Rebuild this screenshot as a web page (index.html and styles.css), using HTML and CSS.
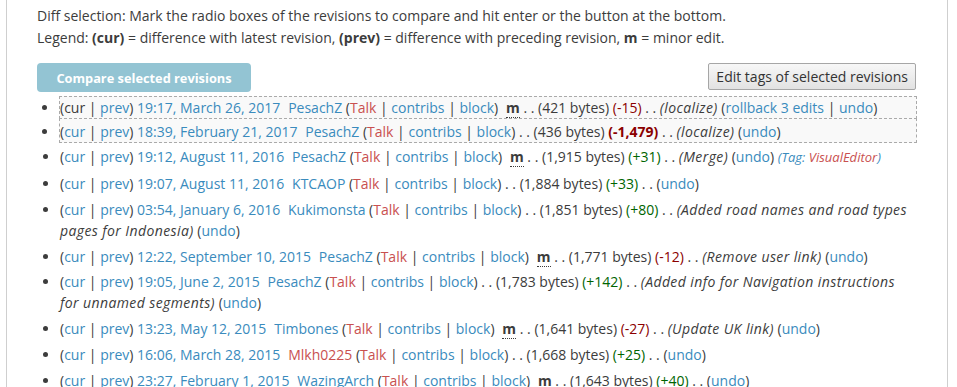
FILE: index.html
```html
<!DOCTYPE html>
<html>
<head lang="en">
    <meta charset="UTF-8">
    <title>Revision history</title>
    <link rel="stylesheet" href="styles.css">
</head>
<body>
<div class="content">
    <p class="history-legend">
        Diff selection: Mark the radio boxes of the revisions to compare and hit enter or the button at the bottom.<br>
        Legend: <b>(cur)</b> = difference with latest revision, <b>(prev)</b> = difference with preceding revision, <b>m</b> = minor edit.
    </p>
    <form id="history-form">
        <div class="history-buttons">
            <button type="button" class="compare-button">Compare selected revisions</button>
            <button type="button" class="tags-button">Edit tags of selected revisions</button>
        </div>
        <ul id="pagehistory" class="pagehistory">
            <li class="selected">
                <span class="histlinks">(cur | <a href="#">prev</a>)</span>
                <a href="#" class="history-date">19:17, March 26, 2017</a>
                <span class="history-user"><a href="#">PesachZ</a> (<a href="#" class="new">Talk</a> | <a href="#">contribs</a> | <a href="#">block</a>)</span>
                <abbr class="minoredit" title="This is a minor edit">m</abbr>
                <span class="separator">. .</span>
                <span class="history-size">(421 bytes)</span>
                <span class="diff-minus">(-15)</span>
                <span class="separator">. .</span>
                <span class="comment">(localize)</span>
                <span class="tools">(<a href="#">rollback 3 edits</a> | <a href="#">undo</a>)</span>
            </li>
            <li class="selected">
                <span class="histlinks">(<a href="#">cur</a> | <a href="#">prev</a>)</span>
                <a href="#" class="history-date">18:39, February 21, 2017</a>
                <span class="history-user"><a href="#">PesachZ</a> (<a href="#" class="new">Talk</a> | <a href="#">contribs</a> | <a href="#">block</a>)</span>
                <span class="separator">. .</span>
                <span class="history-size">(436 bytes)</span>
                <strong class="diff-minus">(-1,479)</strong>
                <span class="separator">. .</span>
                <span class="comment">(localize)</span>
                <span class="tools">(<a href="#">undo</a>)</span>
            </li>
            <li>
                <span class="histlinks">(<a href="#">cur</a> | <a href="#">prev</a>)</span>
                <a href="#" class="history-date">19:12, August 11, 2016</a>
                <span class="history-user"><a href="#">PesachZ</a> (<a href="#" class="new">Talk</a> | <a href="#">contribs</a> | <a href="#">block</a>)</span>
                <abbr class="minoredit" title="This is a minor edit">m</abbr>
                <span class="separator">. .</span>
                <span class="history-size">(1,915 bytes)</span>
                <span class="diff-plus">(+31)</span>
                <span class="separator">. .</span>
                <span class="comment">(Merge)</span>
                <span class="tools">(<a href="#">undo</a>)</span>
                <span class="tag-markers">(Tag: <span class="tag-name">VisualEditor</span>)</span>
            </li>
            <li>
                <span class="histlinks">(<a href="#">cur</a> | <a href="#">prev</a>)</span>
                <a href="#" class="history-date">19:07, August 11, 2016</a>
                <span class="history-user"><a href="#">KTCAOP</a> (<a href="#" class="new">Talk</a> | <a href="#">contribs</a> | <a href="#">block</a>)</span>
                <span class="separator">. .</span>
                <span class="history-size">(1,884 bytes)</span>
                <span class="diff-plus">(+33)</span>
                <span class="separator">. .</span>
                <span class="tools">(<a href="#">undo</a>)</span>
            </li>
            <li>
                <span class="histlinks">(<a href="#">cur</a> | <a href="#">prev</a>)</span>
                <a href="#" class="history-date">03:54, January 6, 2016</a>
                <span class="history-user"><a href="#">Kukimonsta</a> (<a href="#" class="new">Talk</a> | <a href="#">contribs</a> | <a href="#">block</a>)</span>
                <span class="separator">. .</span>
                <span class="history-size">(1,851 bytes)</span>
                <span class="diff-plus">(+80)</span>
                <span class="separator">. .</span>
                <span class="comment">(Added road names and road types pages for Indonesia)</span>
                <span class="tools">(<a href="#">undo</a>)</span>
            </li>
            <li>
                <span class="histlinks">(<a href="#">cur</a> | <a href="#">prev</a>)</span>
                <a href="#" class="history-date">12:22, September 10, 2015</a>
                <span class="history-user"><a href="#">PesachZ</a> (<a href="#" class="new">Talk</a> | <a href="#">contribs</a> | <a href="#">block</a>)</span>
                <abbr class="minoredit" title="This is a minor edit">m</abbr>
                <span class="separator">. .</span>
                <span class="history-size">(1,771 bytes)</span>
                <span class="diff-minus">(-12)</span>
                <span class="separator">. .</span>
                <span class="comment">(Remove user link)</span>
                <span class="tools">(<a href="#">undo</a>)</span>
            </li>
            <li>
                <span class="histlinks">(<a href="#">cur</a> | <a href="#">prev</a>)</span>
                <a href="#" class="history-date">19:05, June 2, 2015</a>
                <span class="history-user"><a href="#">PesachZ</a> (<a href="#" class="new">Talk</a> | <a href="#">contribs</a> | <a href="#">block</a>)</span>
                <span class="separator">. .</span>
                <span class="history-size">(1,783 bytes)</span>
                <span class="diff-plus">(+142)</span>
                <span class="separator">. .</span>
                <span class="comment">(Added info for Navigation instructions for unnamed segments)</span>
                <span class="tools">(<a href="#">undo</a>)</span>
            </li>
            <li>
                <span class="histlinks">(<a href="#">cur</a> | <a href="#">prev</a>)</span>
                <a href="#" class="history-date">13:23, May 12, 2015</a>
                <span class="history-user"><a href="#">Timbones</a> (<a href="#" class="new">Talk</a> | <a href="#">contribs</a> | <a href="#">block</a>)</span>
                <abbr class="minoredit" title="This is a minor edit">m</abbr>
                <span class="separator">. .</span>
                <span class="history-size">(1,641 bytes)</span>
                <span class="diff-minus">(-27)</span>
                <span class="separator">. .</span>
                <span class="comment">(Update UK link)</span>
                <span class="tools">(<a href="#">undo</a>)</span>
            </li>
            <li>
                <span class="histlinks">(<a href="#">cur</a> | <a href="#">prev</a>)</span>
                <a href="#" class="history-date">16:06, March 28, 2015</a>
                <span class="history-user"><a href="#" class="new">Mlkh0225</a> (<a href="#" class="new">Talk</a> | <a href="#">contribs</a> | <a href="#">block</a>)</span>
                <span class="separator">. .</span>
                <span class="history-size">(1,668 bytes)</span>
                <span class="diff-plus">(+25)</span>
                <span class="separator">. .</span>
                <span class="tools">(<a href="#">undo</a>)</span>
            </li>
            <li>
                <span class="histlinks">(<a href="#">cur</a> | <a href="#">prev</a>)</span>
                <a href="#" class="history-date">23:27, February 1, 2015</a>
                <span class="history-user"><a href="#">WazingArch</a> (<a href="#" class="new">Talk</a> | <a href="#">contribs</a> | <a href="#">block</a>)</span>
                <abbr class="minoredit" title="This is a minor edit">m</abbr>
                <span class="separator">. .</span>
                <span class="history-size">(1,643 bytes)</span>
                <span class="diff-plus">(+40)</span>
                <span class="separator">. .</span>
                <span class="tools">(<a href="#">undo</a>)</span>
            </li>
        </ul>
    </form>
</div>
</body>
</html>
```

FILE: styles.css
```css
html, body {
    margin: 0px;
    padding: 0px;
    overflow: hidden;
    background: #ffffff;
}
body {
    font-family: "Open Sans", "DejaVu Sans", sans-serif;
    font-size: 14px;
    color: #3c3c3c;
}
a {
    color: #3a8bbd;
    text-decoration: none;
}
a.new {
    color: #c9504f;
}
.content {
    width: 879px;
    min-height: 100vh;
    margin-left: 6px;
    padding: 5px 31px 0px 30px;
    border-left: 1px solid #cfcfcf;
    border-right: 1px solid #cfcfcf;
}
.history-legend {
    margin: 0px;
    line-height: 22px;
}
.history-buttons {
    display: flex;
    justify-content: space-between;
    align-items: flex-start;
    margin-top: 14px;
}
.compare-button {
    width: 214px;
    height: 29px;
    border: none;
    border-radius: 4px;
    background: #93c4d3;
    color: #ffffff;
    font-family: "Open Sans", sans-serif;
    font-weight: bold;
    font-size: 12.8px;
    padding: 0px;
}
.tags-button {
    height: 27px;
    padding: 0px 7px;
    border: 1px solid #a6a6a6;
    border-radius: 2px;
    background: linear-gradient(#f7f7f7, #e2e2e2);
    color: #333333;
    font-family: "Open Sans", sans-serif;
    font-size: 14px;
}
.pagehistory {
    margin: 4px 0px 0px 0px;
    padding: 0px 0px 0px 23px;
    line-height: 21px;
}
.pagehistory li {
    margin-bottom: 4.9px;
}
.pagehistory li.selected {
    margin: 0px -1px 0px -1px;
    border: 1px dashed #aaaaaa;
    background: #f9f9f9;
}
.pagehistory li.selected + li.selected {
    margin-top: -1px;
    padding-top: 2px;
    margin-bottom: 2.9px;
}
.history-user {
    margin-left: 0.3em;
}
.minoredit {
    font-weight: bold;
    text-decoration: none;
    border-bottom: 1px dotted #3c3c3c;
    margin-left: 0.3em;
}
.diff-plus {
    color: #006400;
}
.diff-minus {
    color: #8b0000;
}
.comment {
    font-style: italic;
    letter-spacing: 0.4px;
}
.tag-markers {
    font-style: italic;
    font-size: 13px;
    color: #3a8bbd;
}
.tag-name {
    color: #c9504f;
}
```
